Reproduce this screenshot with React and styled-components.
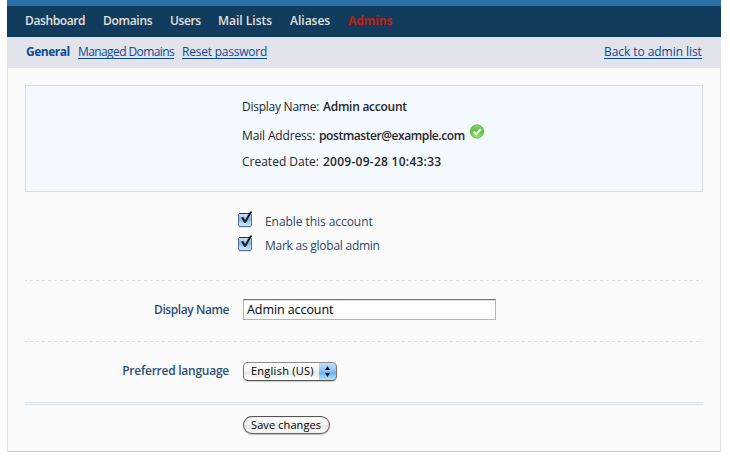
import React from "react";
import styled, { createGlobalStyle } from "styled-components";

const Global = createGlobalStyle`
  *, *::before, *::after { box-sizing: border-box; }
  body {
    margin: 0;
    background: #fff;
    font: 12px/16px "Trebuchet MS", "Open Sans", sans-serif;
    color: #262626;
  }
`;

const Page = styled.div`
  width: 714px;
  height: 452px;
  margin-left: 7px;
  background: #fbfbfb;
`;

const TopStrip = styled.div`
  height: 6px;
  background: #2a6fa7;
`;

const Nav = styled.nav`
  display: flex;
  gap: 18px;
  height: 31px;
  padding: 7px 18px 0;
  background: #123c5d;
`;

const NavItem = styled.a`
  width: ${(p) => p.$w}px;
  white-space: nowrap;
  font-weight: ${(p) => (p.$active ? 700 : 600)};
  letter-spacing: ${(p) => p.$ls || 0}px;
  color: ${(p) => (p.$active ? "#bd2012" : "#e2e2df")};
`;

const SubNav = styled.div`
  display: flex;
  gap: 8px;
  height: 31px;
  padding: 7px 19px 0;
  background: #e3e3ec;
`;

const SubItem = styled.a`
  width: ${(p) => p.$w}px;
  height: 15px;
  line-height: 16px;
  white-space: nowrap;
  letter-spacing: ${(p) => p.$ls || 0}px;
  color: #0b4c93;
  font-weight: ${(p) => (p.$current ? 700 : 400)};
  border-bottom: ${(p) => (p.$current ? "0" : "1px solid #0b4c93")};
  margin-left: ${(p) => (p.$end ? "auto" : "0")};
`;

const Content = styled.main`
  height: 384px;
  padding: 17px 17px 0;
  border: 1px solid #dfe4ec;
  border-top: 0;
  border-bottom-color: #cbced9;
`;

const Info = styled.section`
  height: 107px;
  padding: 13px 0 0 216px;
  border: 1px solid #d6dfe5;
  background: #f3f9fe;
`;

const InfoRow = styled.div`
  display: flex;
  height: ${(p) => p.$h}px;
  white-space: nowrap;
`;

const InfoLabel = styled.span`
  width: ${(p) => p.$w}px;
  letter-spacing: ${(p) => p.$ls || 0}px;
`;

const InfoValue = styled.span`
  width: ${(p) => p.$w}px;
  font-weight: 600;
  letter-spacing: ${(p) => p.$ls || 0}px;
`;

const VerifiedIcon = styled.svg`
  width: 15px;
  height: 15px;
  margin: -4px 0 0 3px;
`;

const Checks = styled.div`
  height: 88px;
  padding: 18px 0 0 212px;
`;

const CheckRow = styled.label`
  display: flex;
  height: 24px;
  color: #2a4769;
  white-space: nowrap;
`;

const CheckIcon = styled.svg`
  width: 17px;
  height: 18px;
  margin-right: 11px;
`;

const CheckText = styled.span`
  padding-top: 4px;
  letter-spacing: ${(p) => p.$ls || 0}px;
`;

const Row = styled.div`
  display: flex;
  height: 61px;
  padding-top: ${(p) => p.$pt}px;
`;

const Dashes = styled.div`
  height: 1px;
  margin-bottom: -1px;
  background: repeating-linear-gradient(90deg, #dedede 0 2px, transparent 2px 5px, #dedede 5px 6px);
`;

const FieldLabel = styled.label`
  width: 204px;
  margin-right: 14px;
  padding-top: ${(p) => p.$pt || 0}px;
  text-align: right;
  font-weight: 600;
  color: #2c4f78;
  letter-spacing: ${(p) => p.$ls || 0}px;
`;

const TextField = styled.input`
  width: 253px;
  height: 21px;
  padding: 0 0 1px 3px;
  border: 1px solid #b5b5b5;
  border-top-color: #737373;
  border-radius: 0;
  outline: 0;
  background: #fff;
  box-shadow: inset 0 1px 0 #e4e4e4;
  font: 12.5px "Trebuchet MS", "Open Sans", sans-serif;
  letter-spacing: ${(p) => p.$ls || 0}px;
  color: #000;
`;

const Select = styled.button`
  display: flex;
  width: 94px;
  height: 19px;
  padding: 0;
  overflow: hidden;
  border: 1px solid #777;
  border-top-color: #8c8c8c;
  border-bottom-color: #555;
  border-radius: 5px;
  background: linear-gradient(#fff, #f5f5f5 48%, #e7e7e7 52%, #fff);
  box-shadow: 0 1px 1px #ccc;
  font: 11px/16px "Trebuchet MS", "Open Sans", sans-serif;
  color: #000;
`;

const SelectText = styled.span`
  width: 75px;
  padding-left: 7px;
  text-align: left;
  white-space: nowrap;
  letter-spacing: ${(p) => p.$ls || 0}px;
`;

const SelectArrows = styled.svg`
  width: 18px;
  height: 19px;
  margin: -1px -1px 0 0;
  flex: none;
`;

const Footer = styled.div`
  height: 3px;
  border: solid #d6dfe5;
  border-width: 1px 0;
`;

const Save = styled.button`
  display: block;
  width: 87px;
  height: 18px;
  margin: 11px 0 0 218px;
  padding: 0 0 0 7px;
  border: 1px solid #666;
  border-top-color: #555;
  border-radius: 10px;
  background: linear-gradient(#fff, #f5f5f5 48%, #e8e8e8 52%, #fff);
  box-shadow: 0 1px 1px #bbb, inset 0 0 1px #777;
  font: 11px/16px "Trebuchet MS", "Open Sans", sans-serif;
  text-align: left;
  white-space: nowrap;
  letter-spacing: ${(p) => p.$ls || 0}px;
  color: #000;
`;

const navItems = [
  { text: "Dashboard", w: 60, ls: -0.38 },
  { text: "Domains", w: 49, ls: -0.3 },
  { text: "Users", w: 30, ls: -0.4 },
  { text: "Mail Lists", w: 54 },
  { text: "Aliases", w: 40 },
  { text: "Admins", w: 45, ls: -0.15, active: true },
];

function Checkbox({ id }) {
  return (
    <CheckIcon viewBox="0 0 17 18">
      <defs>
        <linearGradient id={id} x2="0" y2="1">
          <stop offset="0" stopColor="#d5e6f8" />
          <stop offset="0.45" stopColor="#86b9ea" />
          <stop offset="1" stopColor="#c8f4ff" />
        </linearGradient>
      </defs>
      <path d="M2 17h12" stroke="#ccc" />
      <rect x="1.5" y="3.5" width="13" height="13" rx="1.5" fill={`url(#${id})`} stroke="#5a6d98" />
      <path d="M2 3.5h12" stroke="#24247a" />
      <path d="M4 7.6l2.2-.6 1.9 3.2L13 1.6h2.3L8.8 13H7.3z" fill="#14181f" />
    </CheckIcon>
  );
}

export default function App() {
  return (
    <>
      <Global />
      <Page>
        <TopStrip />
        <Nav>
          {navItems.map((n) => (
            <NavItem key={n.text} $w={n.w} $ls={n.ls} $active={n.active}>{n.text}</NavItem>
          ))}
        </Nav>
        <SubNav>
          <SubItem $w={44} $ls={-0.5} $current>General</SubItem>
          <SubItem $w={96} $ls={-0.6}>Managed Domains</SubItem>
          <SubItem $w={85} $ls={-0.22}>Reset password</SubItem>
          <SubItem $w={98} $ls={-0.06} $end>Back to admin list</SubItem>
        </SubNav>
        <Content>
          <Info>
            <InfoRow $h={29}>
              <InfoLabel $w={81} $ls={-0.25}>Display Name:</InfoLabel>
              <InfoValue $w={84} $ls={-0.26}>Admin account</InfoValue>
            </InfoRow>
            <InfoRow $h={26}>
              <InfoLabel $w={77} $ls={-0.15}>Mail Address:</InfoLabel>
              <InfoValue $w={148} $ls={-0.42}>postmaster@example.com</InfoValue>
              <VerifiedIcon viewBox="0 0 15 15">
                <defs>
                  <linearGradient id="ok" x2="0" y2="1">
                    <stop offset="0" stopColor="#8ad86a" />
                    <stop offset="0.5" stopColor="#55c636" />
                    <stop offset="1" stopColor="#9bf060" />
                  </linearGradient>
                </defs>
                <circle cx="7" cy="7.5" r="6.6" fill="url(#ok)" stroke="#62ad52" />
                <path d="M3.5 7.6l2.6 2.6 4.8-5" fill="none" stroke="#fff" strokeWidth="2.2" />
              </VerifiedIcon>
            </InfoRow>
            <InfoRow $h={20}>
              <InfoLabel $w={81}>Created Date:</InfoLabel>
              <InfoValue $w={118} $ls={0.26}>2009-09-28 10:43:33</InfoValue>
            </InfoRow>
          </Info>
          <Checks>
            <CheckRow><Checkbox id="cb1" /><CheckText $ls={-0.06}>Enable this account</CheckText></CheckRow>
            <CheckRow><Checkbox id="cb2" /><CheckText $ls={-0.25}>Mark as global admin</CheckText></CheckRow>
          </Checks>
          <Dashes />
          <Row $pt={19}>
            <FieldLabel $pt={3} $ls={-0.42}>Display Name</FieldLabel>
            <TextField defaultValue="Admin account" $ls={-0.08} />
          </Row>
          <Dashes />
          <Row $pt={21}>
            <FieldLabel $pt={1} $ls={-0.25}>Preferred language</FieldLabel>
            <Select>
              <SelectText $ls={0.25}>English (US)</SelectText>
              <SelectArrows viewBox="0 0 18 19">
                <defs>
                  <linearGradient id="arr" x2="0" y2="1">
                    <stop offset="0" stopColor="#c9e0f8" />
                    <stop offset="0.48" stopColor="#8fc3f3" />
                    <stop offset="0.55" stopColor="#6db0ee" />
                    <stop offset="1" stopColor="#b8efff" />
                  </linearGradient>
                </defs>
                <rect width="18" height="19" fill="url(#arr)" />
                <path d="M0 .5h14q3.5 0 3.5 4v10q0 4-4 4H0" fill="none" stroke="#2b3c8e" />
                <path d="M6 8l2.5-4L11 8zM6 11h5l-2.5 4z" fill="#111" />
              </SelectArrows>
            </Select>
          </Row>
          <Footer />
          <Save $ls={0.1}>Save changes</Save>
        </Content>
      </Page>
    </>
  );
}
